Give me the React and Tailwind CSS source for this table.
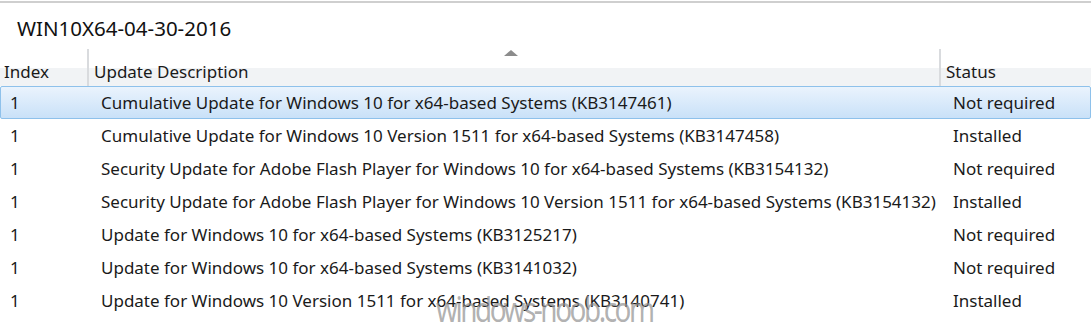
import React from "react";

const rows = [
  ["1", "Cumulative Update for Windows 10 for x64-based Systems (KB3147461)", "Not required"],
  ["1", "Cumulative Update for Windows 10 Version 1511 for x64-based Systems (KB3147458)", "Installed"],
  ["1", "Security Update for Adobe Flash Player for Windows 10 for x64-based Systems (KB3154132)", "Not required"],
  ["1", "Security Update for Adobe Flash Player for Windows 10 Version 1511 for x64-based Systems (KB3154132)", "Installed"],
  ["1", "Update for Windows 10 for x64-based Systems (KB3125217)", "Not required"],
  ["1", "Update for Windows 10 for x64-based Systems (KB3141032)", "Not required"],
  ["1", "Update for Windows 10 Version 1511 for x64-based Systems (KB3140741)", "Installed"],
];

export default function App() {
  return (
    <div
      className="relative w-[1091px] h-[325px] overflow-hidden bg-white text-[#1a1a1a]"
      style={{ fontFamily: '"Noto Sans", "Open Sans", sans-serif' }}
    >
      <div className="h-[2px] mt-[1px] bg-[#cfcfcf]" />
      <div className="h-[46px] pl-[17px] pt-[12px] text-[20.5px] leading-[26px] text-[#111]">
        WIN10X64-04-30-2016
      </div>
      {/* header */}
      <div className="grid grid-cols-[87px_852px_1fr] h-[37px] text-[17px] leading-[20px]">
        <div className="flex flex-col">
          <div className="h-[19px]" />
          <div className="flex-1 bg-[#f1f3f5] pl-[4px]">
            <div className="-mt-[6px]">Index</div>
          </div>
        </div>
        <div className="flex flex-col border-l-2 border-[#d9dbde]">
          <div className="h-[19px] flex justify-center pt-[1px] pr-[7px]">
            <svg width="14" height="7" viewBox="0 0 14 7">
              <polygon points="7,0 14,6 0,6" fill="#8c8c8c" />
            </svg>
          </div>
          <div className="flex-1 bg-[#f1f3f5] pl-[5px]">
            <div className="-mt-[6px]">Update Description</div>
          </div>
        </div>
        <div className="flex flex-col border-l-2 border-[#d9dbde]">
          <div className="h-[19px]" />
          <div className="flex-1 bg-[#f1f3f5] pl-[5px]">
            <div className="-mt-[6px]">Status</div>
          </div>
        </div>
      </div>
      {/* rows */}
      <div className="flex flex-col">
        {rows.map((r, i) => (
          <div
            key={i}
            className={
              "grid grid-cols-[87px_852px_1fr] h-[33px] items-center text-[17px] leading-[22px] " +
              (i === 0
                ? "border border-[#8ec1eb] rounded-[2px] bg-gradient-to-b from-[#eaf3fd] to-[#c9e1f8]"
                : "border border-transparent")
            }
          >
            <div className="pl-[9px]">{r[0]}</div>
            <div className="pl-[13px] whitespace-nowrap">{r[1]}</div>
            <div className="pl-[13px] whitespace-nowrap">{r[2]}</div>
          </div>
        ))}
      </div>
      <div className="absolute left-[436px] top-[291px] text-[34px] leading-[36px] text-[#8f8f8f]/70 tracking-[-3px] origin-left scale-x-[0.82] whitespace-nowrap">
        windows-noob.com
      </div>
    </div>
  );
}
